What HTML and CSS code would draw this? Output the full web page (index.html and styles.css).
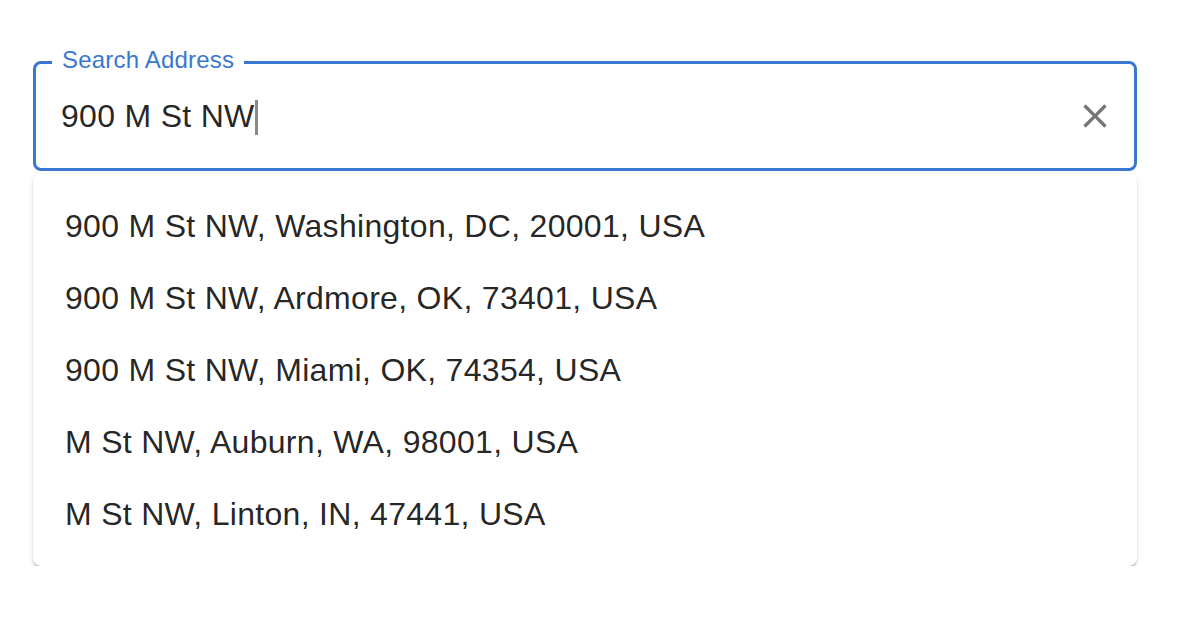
FILE: index.html
```html
<!DOCTYPE html>
<html lang="en">
<head>
<meta charset="utf-8">
<title>Search Address</title>
<link rel="stylesheet" href="styles.css">
</head>
<body>
<div class="page">
  <div class="autocomplete">
    <div class="field">
      <span class="label">Search Address</span>
      <div class="value"><span class="text">900 M St NW</span><span class="caret"></span></div>
      <svg class="clear" viewBox="0 0 24 24" width="40" height="40" aria-hidden="true">
        <path d="M19 6.41L17.59 5 12 10.59 6.41 5 5 6.41 10.59 12 5 17.59 6.41 19 12 13.41 17.59 19 19 17.59 13.41 12z" fill="currentColor"/>
      </svg>
    </div>
    <ul class="listbox">
      <li class="option">900 M St NW, Washington, DC, 20001, USA</li>
      <li class="option">900 M St NW, Ardmore, OK, 73401, USA</li>
      <li class="option">900 M St NW, Miami, OK, 74354, USA</li>
      <li class="option">M St NW, Auburn, WA, 98001, USA</li>
      <li class="option">M St NW, Linton, IN, 47441, USA</li>
    </ul>
  </div>
</div>
</body>
</html>
```

FILE: styles.css
```css
html, body {
  margin: 0;
  padding: 0;
  background: #ffffff;
}

body {
  font-family: "Liberation Sans", Arial, Helvetica, sans-serif;
  color: rgba(0, 0, 0, 0.87);
}

.page {
  padding: 61px 0 0 33px;
}

.autocomplete {
  width: 1104px;
}

.field {
  position: relative;
  box-sizing: border-box;
  height: 110px;
  border: 3px solid #3a77d1;
  border-radius: 8px;
  display: flex;
  align-items: center;
  padding: 0 19px 0 25px;
}

.label {
  position: absolute;
  left: 16px;
  top: -16px;
  padding: 0 10px;
  background: #ffffff;
  color: #3a77d1;
  font-size: 24px;
  line-height: 24px;
  letter-spacing: 0.2px;
}

.value {
  flex: 1;
  display: flex;
  align-items: center;
  font-size: 32px;
  line-height: 48px;
  letter-spacing: 0.3px;
  color: rgba(0, 0, 0, 0.87);
}

.caret {
  display: inline-block;
  width: 3px;
  height: 35px;
  margin-top: 2px;
  background: #8a8a8a;
}

.clear {
  display: block;
  color: #757575;
  flex: none;
}

.listbox {
  list-style: none;
  margin: 3px 0 0;
  padding: 16px 0;
  background: #ffffff;
  border-radius: 8px;
  box-shadow: 0 2px 2px -1px rgba(0, 0, 0, 0.35), 0 2px 3px 0 rgba(0, 0, 0, 0.1), 0 1px 6px 0 rgba(0, 0, 0, 0.08);
}

.option {
  padding: 12px 32px;
  font-size: 32px;
  line-height: 48px;
  letter-spacing: 0.3px;
  color: rgba(0, 0, 0, 0.87);
}
```
